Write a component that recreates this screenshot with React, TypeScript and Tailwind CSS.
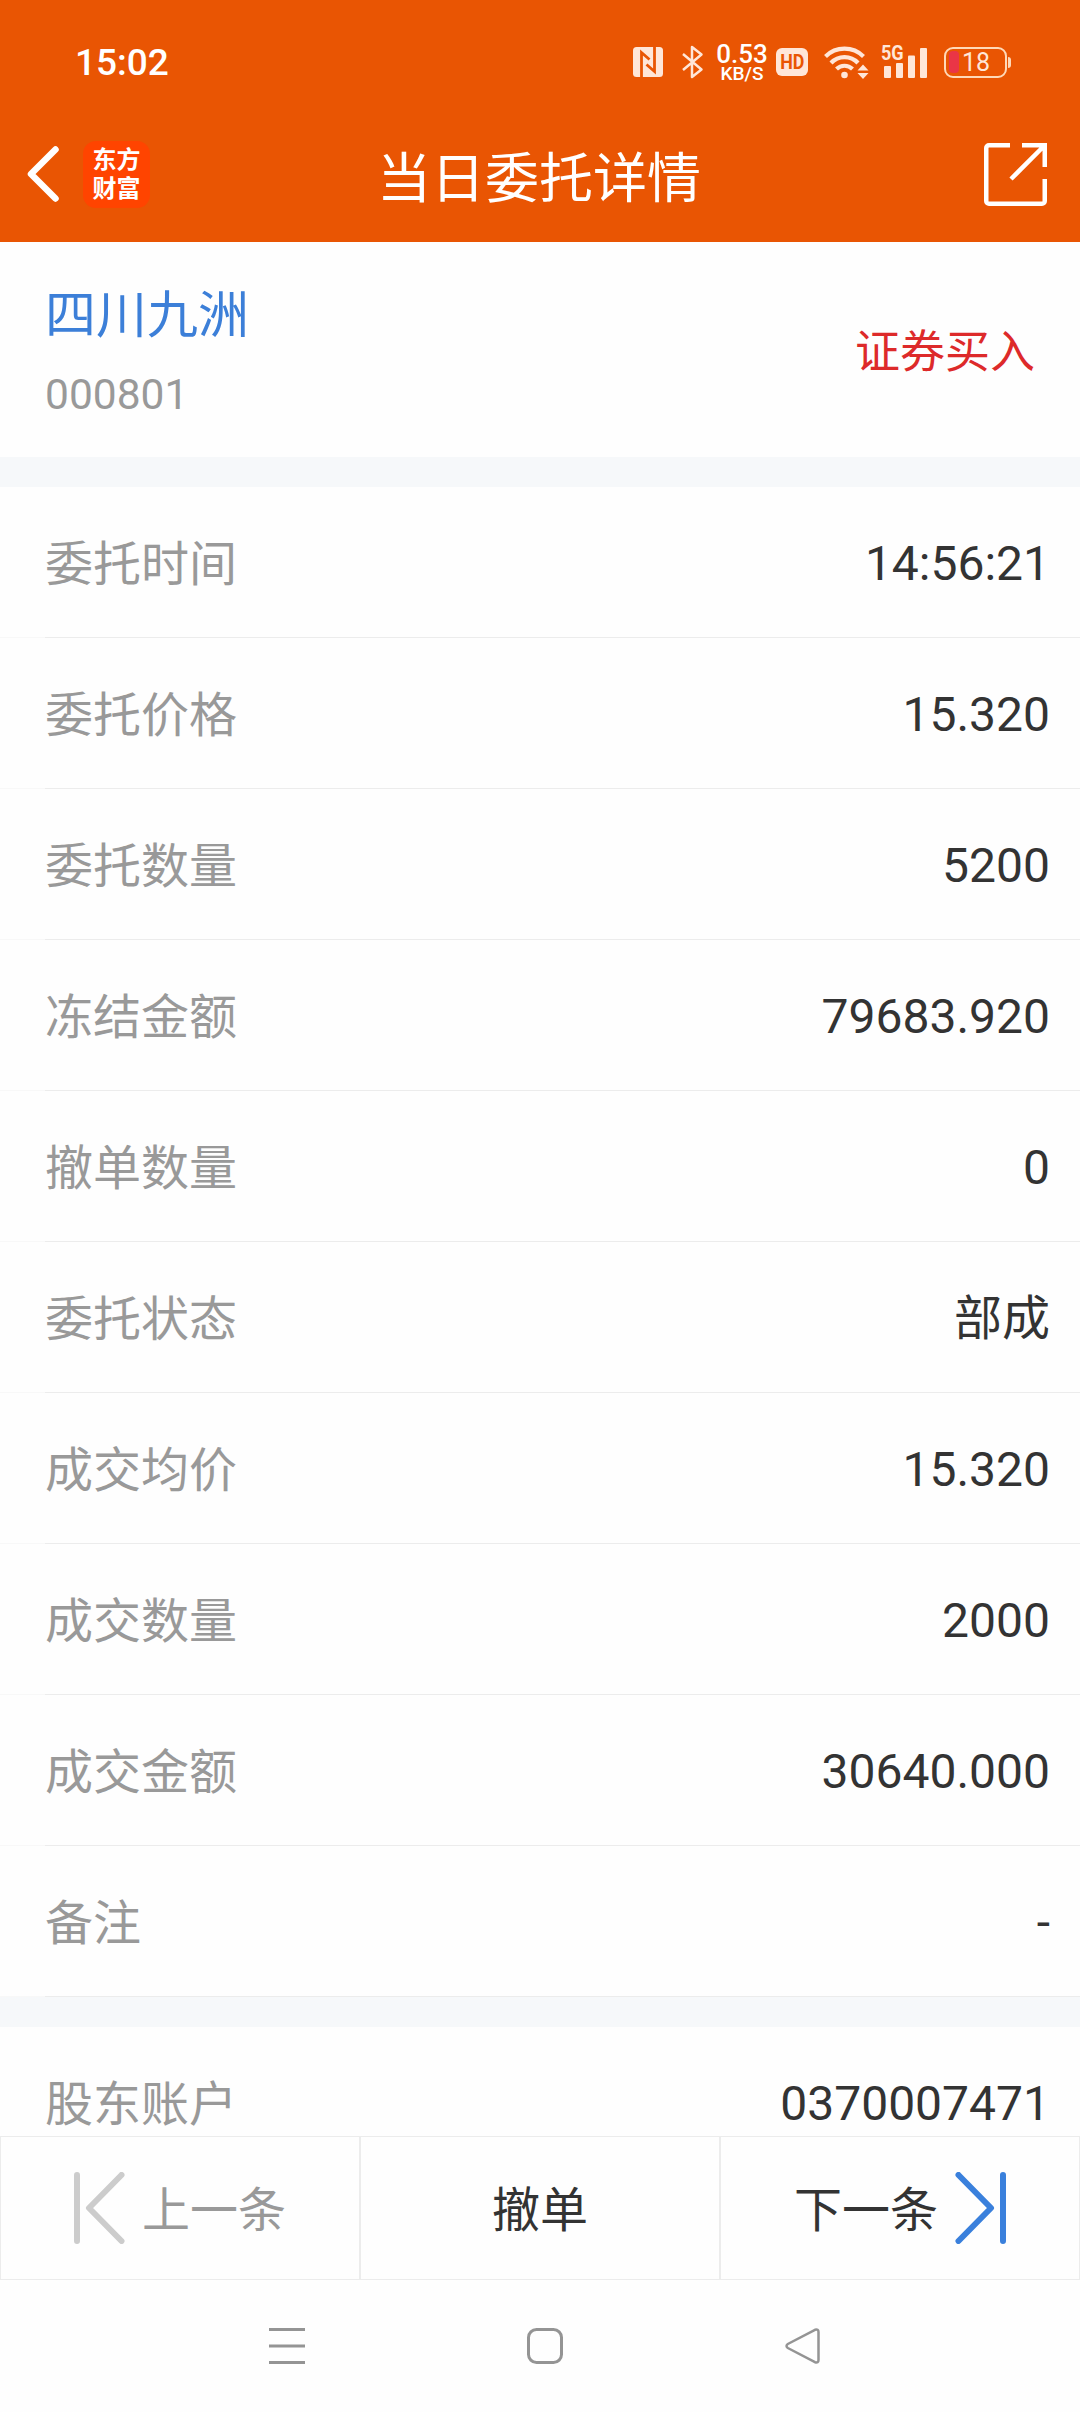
import type { ReactNode } from 'react';

const orderRows = [
  { label: '委托时间', value: '14:56:21' },
  { label: '委托价格', value: '15.320' },
  { label: '委托数量', value: '5200' },
  { label: '冻结金额', value: '79683.920' },
  { label: '撤单数量', value: '0' },
  { label: '委托状态', value: '部成' },
  { label: '成交均价', value: '15.320' },
  { label: '成交数量', value: '2000' },
  { label: '成交金额', value: '30640.000' },
  { label: '备注', value: '-' },
];

const accountRows = [{ label: '股东账户', value: '0370007471' }];

const NfcIcon = () => (
  <svg width="30" height="30" viewBox="0 0 30 30" className="ml-auto shrink-0">
    <rect width="30" height="30" rx="3.5" fill="#ffe6d8" />
    <path d="M8.5 30V5.5L16.5 12.5M21.5 0V24.5L13.5 17.5" fill="none" stroke="#e95503" strokeWidth="2.8" />
  </svg>
);

const BluetoothIcon = () => (
  <svg width="22" height="34" viewBox="0 0 22 34" className="ml-[19px] shrink-0" fill="none" stroke="#ffe6d8" strokeWidth="2.5" strokeLinejoin="round">
    <path d="M1 9L19.5 24.5L10 32V2L19.5 9.5L1 25" />
  </svg>
);

const WifiIcon = () => (
  <svg width="45" height="34" viewBox="0 0 45 34" className="ml-[16px] shrink-0" fill="none" stroke="#ffe6d8" strokeWidth="4.2">
    <path d="M1.5 11.5A27 27 0 0 1 39.5 11.5" />
    <path d="M7 18A18.5 18.5 0 0 1 34 18" />
    <path d="M12.5 24A11.5 11.5 0 0 1 28.5 24" />
    <circle cx="20.5" cy="30" r="3.3" fill="#ffe6d8" stroke="none" />
    <path d="M39 19.5L44.5 25.5H33.5ZM39 34L33.5 28H44.5Z" fill="#ffe6d8" stroke="none" />
  </svg>
);

const Signal = () => (
  <div className="relative ml-[13px] h-[32px] w-[46px] shrink-0">
    <span className="absolute -top-px -left-px origin-left scale-x-[0.86] text-[21px] leading-[16px] font-bold text-[#ffe6d8]">5G</span>
    <svg width="46" height="32" viewBox="0 0 46 32" fill="#ffe6d8">
      <rect x="2" y="20" width="7" height="12" rx="1" />
      <rect x="14" y="17" width="7" height="15" rx="1" />
      <rect x="26" y="9.5" width="7" height="22.5" rx="1" />
      <rect x="38" y="2" width="7" height="30" rx="1" />
    </svg>
  </div>
);

const Battery = () => (
  <div className="ml-[16px] flex shrink-0 items-center">
    <div className="flex h-[31px] w-[63px] items-center rounded-[9px] border-2 border-[#ffd9b8] pl-[3px]">
      <div className="h-[22px] w-[10px] rounded-[4px] bg-[#ea3546]" />
      <span className="ml-[3px] text-[25px] leading-none text-[#ffe6d8]">18</span>
    </div>
    <div className="ml-px h-[11px] w-[3px] rounded-r-sm bg-[#ffd9b8]" />
  </div>
);

const StatusBar = () => (
  <div className="flex h-[106px] items-center pr-[69px] pl-[75px] pt-[18px]">
    <span className="text-[37px] leading-none font-medium">15:02</span>
    <NfcIcon />
    <BluetoothIcon />
    <div className="ml-[12px] flex w-[52px] shrink-0 flex-col items-center pt-[2px] font-medium">
      <span className="text-[26px] leading-[21px]">0.53</span>
      <span className="text-[19px] leading-[17px]">KB/S</span>
    </div>
    <div className="ml-[8px] flex h-[28px] w-[32px] shrink-0 items-center justify-center rounded-[6px] bg-[#ffe6d8] text-[21px] leading-none font-bold text-[#e95503]">
      <span className="scale-x-[0.85]">HD</span>
    </div>
    <WifiIcon />
    <Signal />
    <Battery />
  </div>
);

const NavBar = () => (
  <div className="flex h-[136px] items-center justify-between pr-[33px] pl-[27px]">
    <div className="flex w-[160px] items-center">
      <svg width="32" height="56" viewBox="0 0 32 56" fill="none" stroke="#fff" strokeWidth="6.5" strokeLinecap="round" strokeLinejoin="round">
        <path d="M28.5 3.5L4 28L28.5 52.5" />
      </svg>
      <div className="ml-[24px] flex h-[67px] w-[67px] flex-col items-center justify-center rounded-[13px] bg-[#ff4400] pb-[5px] font-['Noto_Sans_CJK_SC',sans-serif] text-[24px] leading-[29px] font-bold">
        <span>东方</span>
        <span>财富</span>
      </div>
    </div>
    <h1 className="pt-[11px] text-[54px] leading-[64px]">当日委托详情</h1>
    <div className="flex w-[156px] justify-end">
      <svg width="63" height="63" viewBox="0 0 63 63" fill="none" stroke="#fff" strokeWidth="4.5">
        <path d="M26 2.25H5A2.75 2.75 0 0 0 2.25 5V58A2.75 2.75 0 0 0 5 60.75H58A2.75 2.75 0 0 0 60.75 58V36" />
        <path d="M38 2.25H60.75V24M60 3L27 36" />
      </svg>
    </div>
  </div>
);

const Row = ({ label, value }: { label: string; value: string }) => (
  <div className="flex h-[151px] shrink-0 text-[48px] leading-[64px]">
    <div className="w-[45px] border-b border-[#f8f8f8]" />
    <div className="flex flex-1 items-center justify-between border-b border-[#ececec] pr-[30px]">
      <span className="pt-[5px] text-[#999]">{label}</span>
      <span className="pt-[3px] text-[#333]">{value}</span>
    </div>
  </div>
);

const FooterButton = ({ children, className = '' }: { children: ReactNode; className?: string }) => (
  <button className={`flex w-[360px] shrink-0 items-center border border-[#ececec] text-[48px] leading-[64px] ${className}`}>
    {children}
  </button>
);

export default function App() {
  return (
    <div className="flex h-[2412px] w-[1080px] flex-col overflow-hidden bg-[#fefefe] font-['Roboto','Noto_Sans_CJK_SC',sans-serif]">
      <header className="h-[242px] shrink-0 bg-[#e95503] text-white">
        <StatusBar />
        <NavBar />
      </header>

      <main className="flex min-h-0 flex-1 flex-col overflow-hidden">
        <section className="flex h-[215px] shrink-0 items-center justify-between px-[45px]">
          <div className="flex flex-col pt-[7px]">
            <span className="text-[51px] leading-[72px] text-[#3c7fd8]">四川九洲</span>
            <span className="mt-[11px] text-[42.5px] leading-[64px] text-[#999]">000801</span>
          </div>
          <span className="pt-[6px] text-[45px] leading-[60px] text-[#dd2a2a]">证券买入</span>
        </section>

        <div className="h-[30px] shrink-0 bg-[#f6f8fa]" />
        {orderRows.map((row) => (
          <Row key={row.label} {...row} />
        ))}
        <div className="h-[30px] shrink-0 bg-[#f6f8fa]" />
        {accountRows.map((row) => (
          <Row key={row.label} {...row} />
        ))}
      </main>

      <footer className="flex h-[144px] shrink-0">
        <FooterButton className="pl-[73px] text-[#999]">
          <svg width="51" height="72" viewBox="0 0 51 72" fill="none" stroke="#ccc" strokeWidth="6" strokeLinecap="round" strokeLinejoin="round">
            <path d="M3 3V69M47.5 3L15 36L47.5 69" />
          </svg>
          <span className="ml-[17px] pt-[5px]">上一条</span>
        </FooterButton>
        <FooterButton className="justify-center pt-[5px] text-[#333]">撤单</FooterButton>
        <FooterButton className="justify-end pr-[73px] text-[#333]">
          <span className="mr-[17px] pt-[5px]">下一条</span>
          <svg width="51" height="72" viewBox="0 0 51 72" fill="none" stroke="#3a80dc" strokeWidth="6" strokeLinecap="round" strokeLinejoin="round">
            <path d="M48 3V69M3.5 3L36 36L3.5 69" />
          </svg>
        </FooterButton>
      </footer>

      <nav className="flex h-[132px] shrink-0 items-center justify-between pr-[260px] pl-[269px]">
        <svg width="36" height="36" viewBox="0 0 36 36" stroke="#949494" strokeWidth="3">
          <path d="M0 1.5H36M0 18H36M0 34.5H36" />
        </svg>
        <svg width="36" height="36" viewBox="0 0 36 36" fill="none" stroke="#949494" strokeWidth="3">
          <rect x="1.5" y="1.5" width="33" height="33" rx="8" />
        </svg>
        <svg width="35" height="36" viewBox="0 0 35 36" fill="none" stroke="#949494" strokeWidth="2.5" strokeLinejoin="round">
          <path d="M2.8 16L30 1.8Q33.5 0.8 33.5 4V32Q33.5 35.2 30 34.2L2.8 20Q0.2 18 2.8 16Z" />
        </svg>
      </nav>
    </div>
  );
}
